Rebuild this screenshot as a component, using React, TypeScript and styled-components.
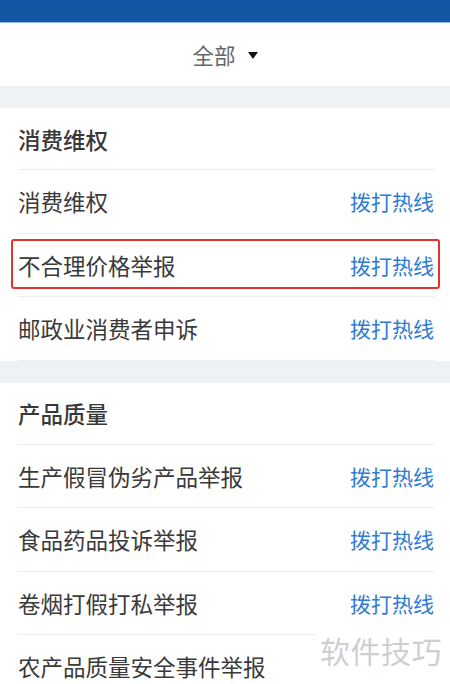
import React from "react";
import styled, { createGlobalStyle } from "styled-components";

const Global = createGlobalStyle`
  html, body { margin: 0; padding: 0; background: #ffffff; }
  body { font-family: "Noto Sans CJK SC", "Noto Sans", sans-serif; overflow: hidden; }
`;

const Page = styled.div`
  position: relative;
  width: 450px;
  height: 684px;
  overflow: hidden;
  background: #ffffff;
`;

const TopBar = styled.div`
  height: 22px;
  background: #1157a3;
  border-bottom: 1px solid #8dbce3;
`;

const Filter = styled.div`
  height: 63px;
  display: flex;
  align-items: center;
  justify-content: center;
  gap: 12px;
  color: #666666;
  font-size: 21.5px;
  background: #ffffff;
`;

const Caret = styled.span`
  width: 0;
  height: 0;
  border-left: 5.5px solid transparent;
  border-right: 5.5px solid transparent;
  border-top: 7px solid #111111;
  margin-top: 1px;
`;

const Gap = styled.div`
  height: 22px;
  background: #eef2f5;
`;

const Section = styled.section`
  background: #ffffff;
`;

const Heading = styled.div`
  height: 62px;
  margin: 0 15px 0 18px;
  display: flex;
  align-items: center;
  font-size: 22.5px;
  font-weight: 500;
  color: #383838;
  border-bottom: 1.5px solid #eceeef;
  box-sizing: border-box;
`;

const Row = styled.div<{ $highlight?: boolean }>`
  position: relative;
  height: 63.5px;
  margin: 0 15px 0 18px;
  display: flex;
  align-items: center;
  justify-content: space-between;
  border-bottom: 1.5px solid #eceeef;
  box-sizing: border-box;
  ${(p) =>
    p.$highlight &&
    `
    &::after {
      content: "";
      position: absolute;
      left: -7px;
      right: -5px;
      top: 5px;
      bottom: 7px;
      border: 2px solid #e2332f;
      border-radius: 3px;
      pointer-events: none;
    }
  `}
`;

const Label = styled.span`
  font-size: 22.5px;
  color: #3a3a3a;
`;

const Link = styled.span`
  font-size: 21px;
  color: #2d7bd4;
  margin-right: 1px;
`;

const Watermark = styled.div`
  position: absolute;
  right: 8px;
  bottom: 14px;
  padding: 0 0 0 4px;
  background: #ffffff;
  color: #cfcfcf;
  font-size: 30px;
  letter-spacing: 0.5px;
  line-height: 40px;
`;

type Item = { label: string; highlight?: boolean; link?: boolean };

const sections: { title: string; items: Item[] }[] = [
  {
    title: "消费维权",
    items: [
      { label: "消费维权", link: true },
      { label: "不合理价格举报", link: true, highlight: true },
      { label: "邮政业消费者申诉", link: true },
    ],
  },
  {
    title: "产品质量",
    items: [
      { label: "生产假冒伪劣产品举报", link: true },
      { label: "食品药品投诉举报", link: true },
      { label: "卷烟打假打私举报", link: true },
      { label: "农产品质量安全事件举报", link: false },
    ],
  },
];

export default function App() {
  return (
    <Page>
      <Global />
      <TopBar />
      <Filter>
        <span>全部</span>
        <Caret />
      </Filter>
      {sections.map((s) => (
        <React.Fragment key={s.title}>
          <Gap />
          <Section>
            <Heading>{s.title}</Heading>
            {s.items.map((it) => (
              <Row key={it.label} $highlight={it.highlight}>
                <Label>{it.label}</Label>
                {it.link && <Link>拨打热线</Link>}
              </Row>
            ))}
          </Section>
        </React.Fragment>
      ))}
      <Watermark>软件技巧</Watermark>
    </Page>
  );
}
